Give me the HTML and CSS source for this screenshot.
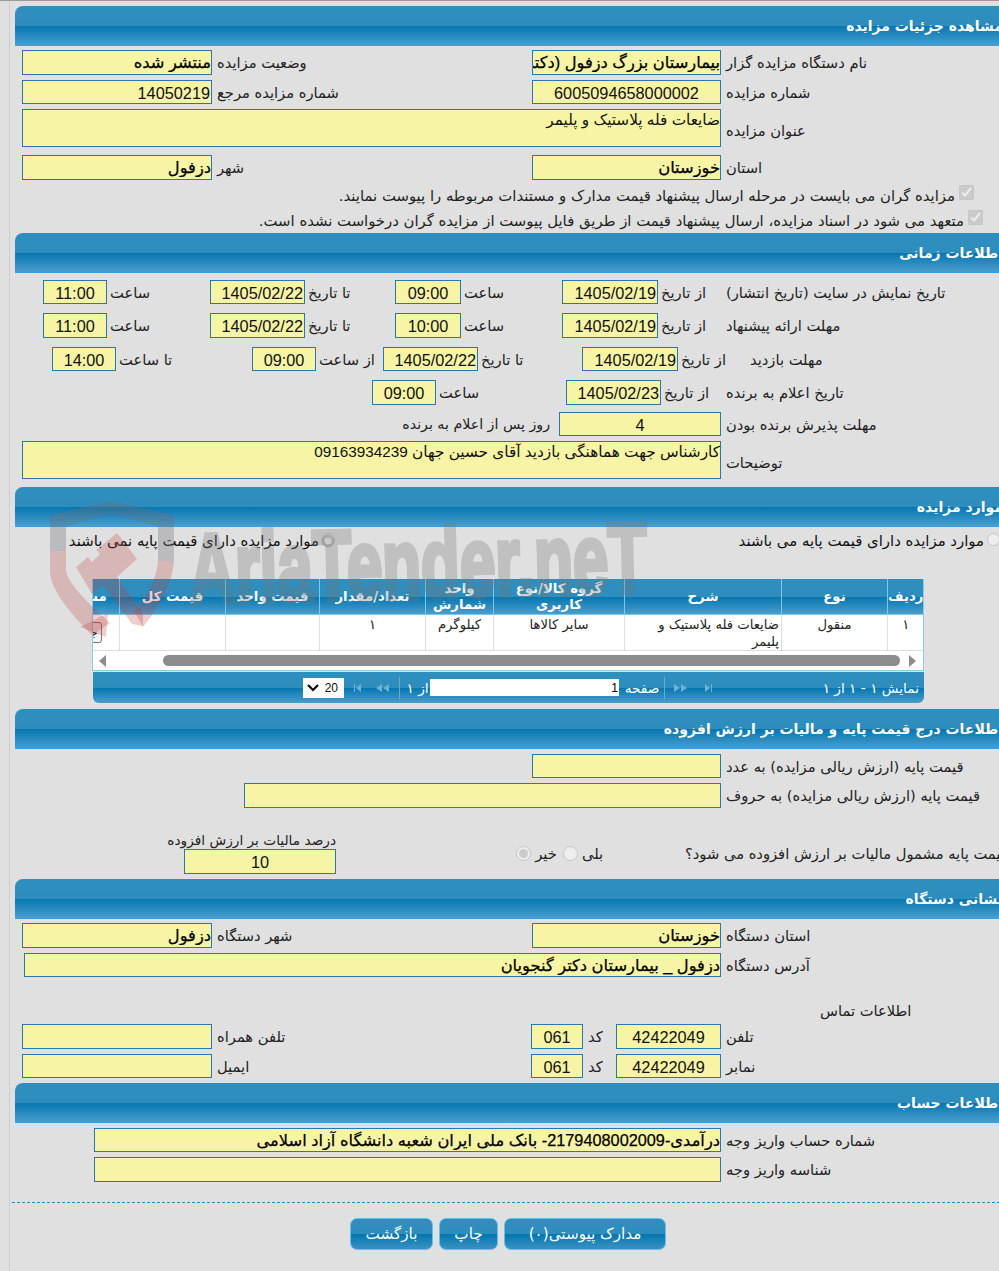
FILE: index.html
```html
<!DOCTYPE html>
<html lang="fa">
<head>
<meta charset="utf-8">
<title>مشاهده جزئیات مزایده</title>
<link rel="stylesheet" href="styles.css">
</head>
<body>
<div class="frame">
<main class="page">

<h2 class="bar">مشاهده جزئیات مزایده</h2>
<div class="row two g4 h25"><input class="f b" readonly value="منتشر شده"><label class="lab">وضعیت مزایده</label><input class="f b" readonly value="بیمارستان بزرگ دزفول (دکتر گنجویان)"><label class="lab">نام دستگاه مزایده گزار</label></div>
<div class="row two g5 h24"><input class="f" readonly value="14050219"><label class="lab">شماره مزایده مرجع</label><input class="f c" readonly value="6005094658000002"><label class="lab">شماره مزایده</label></div>
<div class="row wide g5 h38"><textarea class="f ta" readonly>ضایعات فله پلاستیک و پلیمر</textarea><label class="lab low">عنوان مزایده</label></div>
<div class="row two g8 h25"><input class="f b" readonly value="دزفول"><label class="lab">شهر</label><input class="f b" readonly value="خوزستان"><label class="lab">استان</label></div>
<div class="check g3 c1"><input type="checkbox" checked disabled><span>مزایده گران می بایست در مرحله ارسال پیشنهاد قیمت مدارک و مستندات مربوطه را پیوست نمایند.</span></div>
<div class="check c2"><input type="checkbox" checked disabled><span>متعهد می شود در اسناد مزایده، ارسال پیشنهاد قیمت از طریق فایل پیوست از مزایده گران درخواست نشده است.</span></div>

<h2 class="bar">اطلاعات زمانی</h2>
<div class="row t12 g7 h24"><input class="f c" readonly value="11:00"><label class="sub">ساعت</label><input class="f" readonly value="1405/02/22"><label class="sub">تا تاریخ</label><input class="f c" readonly value="09:00"><label class="sub">ساعت</label><input class="f" readonly value="1405/02/19"><label class="sub">از تاریخ</label><label class="lab">تاریخ نمایش در سایت (تاریخ انتشار)</label></div>
<div class="row t12 g9 h25"><input class="f c" readonly value="11:00"><label class="sub">ساعت</label><input class="f" readonly value="1405/02/22"><label class="sub">تا تاریخ</label><input class="f c" readonly value="10:00"><label class="sub">ساعت</label><input class="f" readonly value="1405/02/19"><label class="sub">از تاریخ</label><label class="lab">مهلت ارائه پیشنهاد</label></div>
<div class="row t3 g9 h24"><input class="f c" readonly value="14:00"><label class="sub">تا ساعت</label><input class="f c" readonly value="09:00"><label class="sub">از ساعت</label><input class="f" readonly value="1405/02/22"><label class="sub">تا تاریخ</label><input class="f" readonly value="1405/02/19"><label class="sub">از تاریخ</label><label class="lab far">مهلت بازدید</label></div>
<div class="row t4 g9 h25"><input class="f c" readonly value="09:00"><label class="sub">ساعت</label><input class="f" readonly value="1405/02/23"><label class="sub">از تاریخ</label><label class="lab">تاریخ اعلام به برنده</label></div>
<div class="row t5 g7 h24"><label class="after">روز پس از اعلام به برنده</label><input class="f c" readonly value="4"><label class="lab">مهلت پذیرش برنده بودن</label></div>
<div class="row wide g5 h38"><textarea class="f ta" readonly>کارشناس جهت هماهنگی بازدید آقای حسین جهان 09163934239</textarea><label class="lab low">توضیحات</label></div>

<h2 class="bar g8">موارد مزایده</h2>
<div class="radios">
  <label class="ropt"><input type="radio" name="base" disabled><span>موارد مزایده دارای قیمت پایه نمی باشند</span></label>
  <label class="ropt"><input type="radio" name="base" disabled><span>موارد مزایده دارای قیمت پایه می باشند</span></label>
</div>
<section class="grid">
  <div class="clip">
    <table class="items" dir="rtl">
      <colgroup><col class="c36"><col class="c106"><col class="c157"><col class="c131"><col class="c68"><col class="c106"><col class="c94"><col class="c106"><col class="c77"></colgroup>
      <thead><tr><th>ردیف</th><th>نوع</th><th>شرح</th><th>گروه کالا/نوع کاربری</th><th>واحد شمارش</th><th>تعداد/مقدار</th><th>قیمت واحد</th><th>قیمت کل</th><th>مشاهده</th></tr></thead>
      <tbody><tr><td class="ctr">۱</td><td class="ctr">منقول</td><td class="desc">ضایعات فله پلاستیک و پلیمر</td><td class="ctr">سایر کالاها</td><td class="ctr">کیلوگرم</td><td class="ctr">۱</td><td></td><td></td><td class="ctr"><button class="detail" type="button">جزئیات</button></td></tr></tbody>
    </table>
  </div>
  <div class="scroll"><i class="arrow left"></i><div class="thumb"></div><i class="arrow right"></i></div>
</section>
<nav class="pager">
  <select class="size" dir="rtl"><option>20</option></select>
  <svg class="ico first" viewBox="0 0 12 8"><path d="M1 0h1v8H1zM8 0v8L3 4z"/></svg>
  <svg class="ico prev" viewBox="0 0 15 8"><path d="M7 0v8L1 4zM14 0v8L8 4z"/></svg>
  <i class="div d1"></i>
  <span class="of">از ۱</span>
  <input class="pageno" readonly value="1">
  <span class="pg">صفحه</span>
  <i class="div d2"></i>
  <svg class="ico next" viewBox="0 0 15 8"><path d="M1 0v8l6-4zM8 0v8l6-4z"/></svg>
  <svg class="ico last" viewBox="0 0 12 8"><path d="M4 0v8l5-4zM10 0h1v8h-1z"/></svg>
  <span class="count">نمایش ۱ - ۱ از ۱</span>
</nav>

<h2 class="bar g6">اطلاعات درج قیمت پایه و مالیات بر ارزش افزوده</h2>
<div class="row two g5 h24"><span></span><span></span><input class="f" readonly><label class="lab">قیمت پایه (ارزش ریالی مزایده) به عدد</label></div>
<div class="row words g5 h25"><input class="f" readonly><label class="lab">قیمت پایه (ارزش ریالی مزایده) به حروف</label></div>
<div class="tax">
  <div class="taxcell"><label class="taxlab">درصد مالیات بر ارزش افزوده</label><input class="f c taxin" readonly value="10"></div>
  <div class="vat">
    <input class="rno" type="radio" name="vat" checked disabled><span class="tno">خیر</span>
    <input class="ryes" type="radio" name="vat" disabled><span class="tyes">بلی</span>
    <span class="q">قیمت پایه مشمول مالیات بر ارزش افزوده می شود؟</span>
  </div>
</div>

<h2 class="bar g5">نشانی دستگاه</h2>
<div class="row two g4 h25"><input class="f b" readonly value="دزفول"><label class="lab">شهر دستگاه</label><input class="f b" readonly value="خوزستان"><label class="lab">استان دستگاه</label></div>
<div class="row addr g5 h24"><input class="f b" readonly value="دزفول _ بیمارستان دکتر گنجویان"><label class="lab">آدرس دستگاه</label></div>
<div class="contact">اطلاعات تماس</div>
<div class="row tel g3 h25"><input class="f" readonly><label class="lab">تلفن همراه</label><input class="f c" readonly value="061"><label class="lab">کد</label><input class="f c" readonly value="42422049"><label class="lab">تلفن</label></div>
<div class="row tel g5 h24"><input class="f" readonly><label class="lab">ایمیل</label><input class="f c" readonly value="061"><label class="lab">کد</label><input class="f c" readonly value="42422049"><label class="lab">نمابر</label></div>

<h2 class="bar g5">اطلاعات حساب</h2>
<div class="row acct g5 h24"><input class="f b" readonly value="درآمدی-2179408002009- بانک ملی ایران شعبه دانشگاه آزاد اسلامی"><label class="lab">شماره حساب واریز وجه</label></div>
<div class="row acct g5 h25"><input class="f" readonly><label class="lab">شناسه واریز وجه</label></div>

<div class="dash"></div>
<div class="actions">
  <button class="btn b83" type="button">بازگشت</button>
  <button class="btn b59" type="button">چاپ</button>
  <button class="btn b162" type="button">مدارک پیوستی(۰)</button>
</div>
</main>
</div>

<svg class="mark" viewBox="0 0 660 640" aria-hidden="true">
  <path class="mg" d="M50 524V514L111 500L174 514V560H158V525L111 513L66 525V550H50Z"/>
  <path class="mr" d="M50 550H66V570Q68 585 110 622L92 634Q52 595 50 572Z"/>
  <path class="mr" d="M80 626L108 612L106 636Z"/>
  <path class="mr" d="M174 560Q172 590 143 626L134 610Q156 585 158 560Z"/>
  <path class="mr" d="M76 566L88 556L92 561L100 553L96 549L117 532L137 558L117 576L143 612L143 625L132 623L103 584L92 593Z"/>
  <text class="mt" x="190" y="603" textLength="458" lengthAdjust="spacingAndGlyphs" transform="rotate(-1.5 190 603)">AriaTender.neT</text>
  <circle class="mc" cx="328" cy="540" r="5"/>
</svg>
</body>
</html>
```

FILE: styles.css
```css
html, body { margin: 0; padding: 0; height: 100%; overflow: hidden; background: #e0e0e0; }
body {
  position: relative;
  border-top: 1px solid #9a9a9a;
  box-sizing: border-box;
  font: 14.7px "Liberation Sans", "DejaVu Sans", sans-serif;
  color: #111;
}
.frame { margin-left: 9px; border-left: 1px solid #cdcdcd; padding: 5px 0 0 5px; width: 1020px; height: 1300px; }
.page { width: 1000px; }

.bar {
  box-sizing: border-box;
  height: 40px;
  margin: 0;
  padding: 0 12px 0 0;
  border-bottom: 1px solid #3c9ce0;
  border-radius: 8px 0 0 0;
  background: linear-gradient(#2e8fbf 0, #2e8dbc 50%, #0476b0 51%, #4a9dcb 100%);
  color: #fff;
  font: bold 14px/41px "DejaVu Sans", sans-serif;
  direction: rtl;
  text-align: right;
  white-space: nowrap;
}
.g3 { margin-top: 3px; } .g4 { margin-top: 4px; } .g5 { margin-top: 5px; } .g6 { margin-top: 6px; }
.g7 { margin-top: 7px; } .g8 { margin-top: 8px; } .g9 { margin-top: 9px; }
.h24 { height: 24px; } .h25 { height: 25px; } .h38 { height: 38px; }

.row { display: grid; align-items: center; }
.two { padding-left: 7px; grid-template-columns: 190px 320px 189px 1fr; }
.wide { padding-left: 7px; grid-template-columns: 699px 1fr; }
.t12 { padding-left: 28px; grid-template-columns: 64px 103px 95px 90px 66px 101px 96px 63px 1fr; }
.t3 { padding-left: 37px; grid-template-columns: 64px 136px 64px 67px 95px 104px 96px 48px 1fr; }
.t4 { padding-left: 357px; grid-template-columns: 64px 130px 95px 60px 1fr; }
.t5 { padding-left: 7px; grid-template-columns: 537px 162px 1fr; }
.words { padding-left: 229px; grid-template-columns: 477px 1fr; }
.addr { padding-left: 9px; grid-template-columns: 697px 1fr; }
.tel { padding-left: 7px; grid-template-columns: 190px 319px 52px 33px 105px 1fr; }
.acct { padding-left: 79px; grid-template-columns: 627px 1fr; }

.f {
  box-sizing: border-box;
  width: 100%;
  height: 100%;
  margin: 0;
  padding: 2px 1px 0;
  border: 1px solid #2a76ae;
  border-radius: 0;
  outline: 0;
  background: #f7f5a5;
  color: #111;
  direction: rtl;
  font: 16.3px "Liberation Sans", "DejaVu Sans", sans-serif;
}
.c { text-align: center; }
.b { padding: 0; font-size: 16.3px; color: #000; -webkit-text-stroke: .25px #000; }
.ta { display: block; resize: none; overflow: hidden; padding: 0; font-size: 15.3px; line-height: 20px; }

.lab, .sub, .after, .check, .ropt, .taxlab, .vat span, .contact {
  direction: rtl;
  white-space: nowrap;
  font: 14.7px "DejaVu Sans", sans-serif;
  color: #222;
}
.lab { text-align: left; padding-left: 5px; }
.low { padding-top: 5px; }
.sub { text-align: left; padding-left: 3px; }
.far { padding-left: 24px; }
.after { text-align: right; padding-right: 9px; font-size: 14.2px; }

.check { display: flex; align-items: center; gap: 4px; height: 25px; font-size: 14.85px; }
.c1 { width: 959px; }
.c2 { width: 968px; }
.check input { width: 15px; height: 15px; margin: -6px 0 0; }

.radios { display: grid; grid-template-columns: 320px 665px; height: 28px; align-items: center; }
.ropt { display: flex; align-items: center; gap: 3px; color: #111; font-size: 14.9px; }
.ropt input { width: 13px; height: 13px; margin: -3px 0 0; }

.grid { box-sizing: border-box; width: 832px; margin: 24px 0 0 77px; border: 1px solid #8ccbe8; border-top: 0; background: #fff; }
.clip { overflow: hidden; direction: ltr; }
.items { width: 881px; margin-left: -51px; table-layout: fixed; border-collapse: collapse; }
.c36 { width: 36px; } .c106 { width: 106px; } .c157 { width: 157px; } .c131 { width: 131px; }
.c68 { width: 68px; } .c94 { width: 94px; } .c77 { width: 77px; }
.items th {
  height: 35px;
  padding: 0;
  border-left: 1px solid #7cc8ee;
  border-bottom: 1px solid #7cc8ee;
  background: linear-gradient(#2e8fbf 0, #2e8dbc 50%, #0476b0 51%, #4a9dcb 100%);
  color: #fff;
  font: bold 13.3px/16px "DejaVu Sans", sans-serif;
}
.items td {
  height: 36px;
  padding: 1px 2px 0;
  box-sizing: border-box;
  vertical-align: top;
  border-left: 1px solid #ddd;
  border-bottom: 1px solid #ddd;
  font: 13.2px/17px "DejaVu Sans", sans-serif;
  color: #222;
}
.items td.desc { padding-left: 8px; }
.ctr { text-align: center; }
.detail {
  box-sizing: border-box;
  width: 42px;
  height: 21px;
  margin: 6px 0 0;
  padding: 0;
  overflow: hidden;
  border: 1px solid #777;
  border-radius: 3px;
  background: #f4f4f4;
  font: 11px "DejaVu Sans", sans-serif;
}
.scroll { display: flex; align-items: center; height: 19px; padding: 0 7px 0 6px; background: #fff; }
.thumb { flex: 1; height: 11px; margin: 0 9px 0 57px; border-radius: 6px; background: #8c8c8c; }
.arrow { width: 0; height: 0; border-top: 6px solid transparent; border-bottom: 6px solid transparent; }
.arrow.left { border-right: 7px solid #8c8c8c; }
.arrow.right { border-left: 7px solid #8c8c8c; }

.pager {
  box-sizing: border-box;
  display: flex;
  align-items: center;
  width: 831px;
  height: 31px;
  margin: 1px 0 0 78px;
  border-radius: 0 0 6px 6px;
  background: linear-gradient(#2e8fbf 0, #2e8dbc 50%, #0476b0 51%, #4a9dcb 100%);
  color: #fff;
  font: 13.7px "DejaVu Sans", sans-serif;
}
.pager span { direction: rtl; white-space: nowrap; }
.size {
  box-sizing: border-box;
  width: 41px;
  height: 20px;
  margin-left: 210px;
  padding: 0 6px 0 0;
  border: 0;
  border-radius: 0;
  appearance: none;
  background: #fff url("data:image/svg+xml,%3Csvg xmlns='http://www.w3.org/2000/svg' width='12' height='8'%3E%3Cpath d='M1 1l5 5 5-5' fill='none' stroke='%23000' stroke-width='2'/%3E%3C/svg%3E") no-repeat 4px center;
  color: #111;
  font: 12px "Liberation Sans", sans-serif;
}
.ico { height: 8px; fill: #6cb1d6; }
.first { width: 12px; margin-left: 9px; }
.prev { width: 15px; margin-left: 10px; }
.div { width: 1px; height: 22px; background: #6ba9cc; }
.d1 { margin-left: 9px; }
.of { width: 25px; text-align: center; margin-left: 5px; }
.pageno { box-sizing: border-box; width: 189px; height: 17px; margin-left: 0; padding: 0 1px; border: 0; background: #fff; direction: rtl; font: 12px "Liberation Sans", sans-serif; color: #000; }
.pg { width: 40px; text-align: center; margin-left: 3px; }
.d2 { margin-left: 2px; }
.next { width: 15px; margin-left: 8px; }
.last { width: 12px; margin-left: 13px; }
.count { margin-left: auto; margin-right: 5px; }

.tax { display: grid; grid-template-columns: 321px 1fr; height: 66px; }
.taxcell { display: flex; flex-direction: column; align-items: flex-end; justify-content: flex-end; height: 42px; margin-top: 24px; }
.taxlab { line-height: 17px; height: 17px; font-size: 13.7px; }
.taxin { width: 152px; height: 25px; flex: none; }
.vat { display: flex; align-items: center; height: 40px; margin-top: 25px; }
.vat input { flex: none; width: 15px; height: 15px; margin: 0; }
.rno { margin-left: 180px !important; }
.tno { width: 30px; text-align: center; }
.ryes { margin-left: 2px !important; }
.tyes { width: 31px; text-align: left; padding-left: 4px; box-sizing: border-box; }
.q { margin-left: 76px; }

.contact { padding-left: 805px; height: 21px; line-height: 21px; margin-top: 23px; text-align: left; }

.dash { margin: 20px 0 0 -3px; width: 1003px; border-top: 1px dashed #2a88c0; }
.actions { display: flex; gap: 6px; margin: 15px 0 0 335px; }
.btn {
  height: 32px;
  padding: 0;
  border: 1px solid #5fc0ee;
  border-radius: 7px;
  background: linear-gradient(#2e8fbf 0, #2e8dbc 50%, #0476b0 51%, #3a92c2 100%);
  color: #fff;
  direction: rtl;
  font: 15.2px "DejaVu Sans", sans-serif;
}
.b83 { width: 83px; } .b59 { width: 59px; } .b162 { width: 162px; }

.mark { position: absolute; left: 0; top: 0; width: 660px; height: 640px; pointer-events: none; }
.mg { fill: rgba(110,110,120,.32); }
.mr { fill: rgba(190,60,60,.26); }
.mt { fill: #777; stroke: #777; stroke-width: 5px; opacity: .3; font: bold 100px "Liberation Sans", sans-serif; }
.mc { fill: none; stroke: rgba(110,110,110,.35); stroke-width: 3; }
```
